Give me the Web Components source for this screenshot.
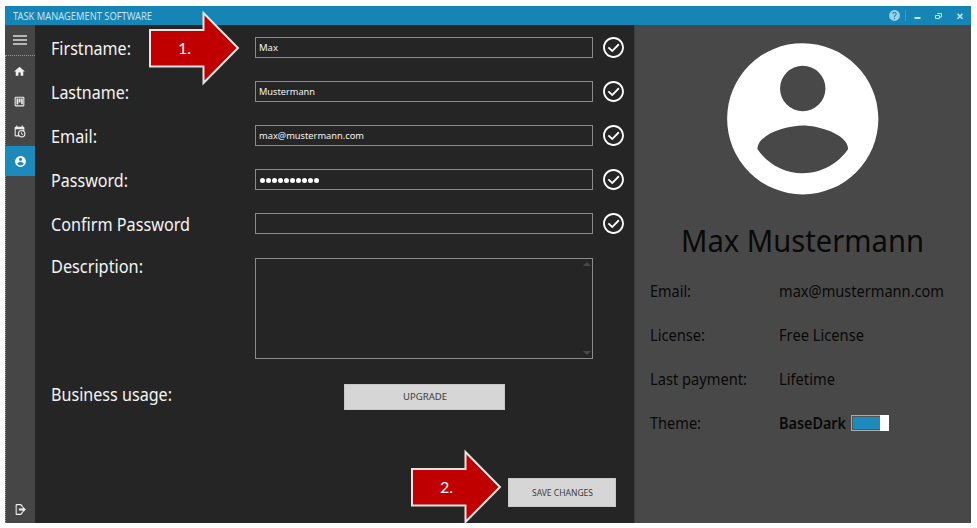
<!DOCTYPE html>
<html lang="en"><head><meta charset="utf-8"><title>Task Management Software</title>
<style>html,body{margin:0;height:100%;background:#fff;overflow:hidden}body{font-family:"Noto Sans","Open Sans",sans-serif}</style></head>
<body><task-app></task-app>
<script>
const define=(name,html,init)=>customElements.define(name,class extends HTMLElement{
  connectedCallback(){
    if(this.shadowRoot)return;
    const t=document.createElement('template');
    t.innerHTML=typeof html==='function'?html(this):html;
    this.attachShadow({mode:'open'}).append(t.content.cloneNode(true));
    if(init)init(this);
  }
});
// Text run scaled horizontally to a given width
define('fit-text','<style>:host{display:inline-block;white-space:nowrap;text-align:left}span{display:inline-block;transform-origin:0 50%}</style><span><slot></slot></span>',el=>{
  const s=el.shadowRoot.querySelector('span'),w=+el.getAttribute('w');
  s.style.transform=`scaleX(${w/s.getBoundingClientRect().width})`;
  el.style.width=w+'px';
});
const icons={
  home:'M10,20V14H14V20H19V12H22L12,3L2,12H5V20H10Z',
  board:'M5 3H19A2 2 0 0 1 21 5V19A2 2 0 0 1 19 21H5A2 2 0 0 1 3 19V5A2 2 0 0 1 5 3M5 5V19H19V5ZM6.5 6.5H9.8V17.5H6.5ZM10.800 6.5H14V14H10.800ZM15 6.5H18V17H15Z',
  schedule:'M15,13H16.5V15.82L18.94,17.23L18.19,18.53L15,16.69V13M19,8H5V19H9.67C9.24,18.09 9,17.07 9,16A7,7 0 0,1 16,9C17.07,9 18.09,9.24 19,9.67V8M5,21C3.89,21 3,20.1 3,19V5C3,3.89 3.89,3 5,3H6V1H8V3H16V1H18V3H19A2,2 0 0,1 21,5V11.1C22.24,12.36 23,14.09 23,16A7,7 0 0,1 16,23C14.09,23 12.36,22.24 11.1,21H5M16,11.15A4.85,4.85 0 0,0 11.15,16C11.15,18.68 13.32,20.85 16,20.85A4.85,4.85 0 0,0 20.85,16C20.85,13.32 18.68,11.15 16,11.15Z',
  account:'M12,19.2C9.5,19.2 7.29,17.92 6,16C6.03,14 10,12.9 12,12.9C14,12.9 17.97,14 18,16C16.71,17.92 14.5,19.2 12,19.2M12,5A3,3 0 0,1 15,8A3,3 0 0,1 12,11A3,3 0 0,1 9,8A3,3 0 0,1 12,5M12,2A10,10 0 0,0 2,12A10,10 0 0,0 12,22A10,10 0 0,0 22,12C22,6.47 17.5,2 12,2Z',
  exit:'M4 2H13L16 5V8H14V6L12 4H5V20H12L14 18V16H16V19L13 22H4L3 21V3ZM9 10H16V6.5L22 12L16 17.5V14H9Z',
  check:'M12 2C6.5 2 2 6.5 2 12S6.500 22 12 22 22 17.500 22 12 17.500 2 12 2M12 20.200C7.500 20.200 3.800 16.500 3.800 12S7.500 3.800 12 3.800 20.200 7.500 20.200 12 16.500 20.200 12 20.200M16.500 8.200L10.800 14.100L7.700 11.200L6.500 12.500L10.800 16.600L17.800 9.500Z',
  help:'M15.07,11.25L14.17,12.17C13.45,12.89 13,13.5 13,15H11V14.5C11,13.39 11.45,12.39 12.17,11.67L13.41,10.41C13.78,10.05 14,9.55 14,9C14,7.89 13.1,7 12,7A2,2 0 0,0 10,9H8A4,4 0 0,1 12,5A4,4 0 0,1 16,9C16,9.88 15.64,10.67 15.07,11.25M13,19H11V17H13M12,2A10,10 0 0,0 2,12A10,10 0 0,0 12,22A10,10 0 0,0 22,12C22,6.47 17.5,2 12,2Z'
};
define('ui-icon',el=>`<style>:host{display:block;flex:none;width:${el.getAttribute('size')}px;height:${el.getAttribute('size')}px}svg{display:block;width:100%;height:100%}</style><svg viewBox="0 0 24 24" fill="currentColor" fill-rule="evenodd"><path d="${icons[el.getAttribute('name')]}"/></svg>`);
define('title-bar',`<style>:host{display:flex;align-items:center;height:19px;background:#1585b5;color:#c7e3ef;padding:0 6px 0 8px;font-size:10px;line-height:19px}
.sp{flex:1}.sep{width:1px;height:11px;background:#3f9cc4;margin:0 7px 0 4px}svg{display:block}fit-text{padding-top:1px}</style>
<fit-text w="139">TASK MANAGEMENT SOFTWARE</fit-text><div class="sp"></div><ui-icon name="help" size="13" style="color:#9fcfe3"></ui-icon><div class="sep"></div>
<svg width="52" height="12" fill="none" stroke="#c7e3ef"><path d="M1.500 8H7.500" stroke-width="2"/><path d="M24.500 4V3.500H28.500V7H27M22.500 5.500H26.500V8.500H22.500Z"/><path d="M44.500 3.700L49.500 8.700M49.500 3.700L44.500 8.700" stroke-width="1.600"/></svg>`);
define('nav-item',el=>`<style>:host{display:flex;height:30px;align-items:center;justify-content:center;box-sizing:border-box;padding:0 1.500px 0 0;color:#eee}:host([active]){background:#1c8abb;color:#fff;margin-left:-1px;padding-right:0}</style><ui-icon name="${el.getAttribute('icon')}" size="13"></ui-icon>`);
define('side-nav',`<style>:host{display:flex;flex-direction:column;background:#464646}.burger{height:30px;box-sizing:border-box;padding:10px 8px 0 8px;display:flex;flex-direction:column;gap:2px}.burger i{height:2px;background:#b5b5b5}
.items{flex:1;display:flex;flex-direction:column;border-top:1px dotted #999;border-left:1px dotted #999;box-sizing:border-box}.sp{flex:1}nav-item[icon=exit]{padding:2px 1px 0 0}</style>
<div class="burger"><i></i><i></i><i></i></div><div class="items"><nav-item icon="home"></nav-item><nav-item icon="board"></nav-item><nav-item icon="schedule"></nav-item><nav-item icon="account" active></nav-item><div class="sp"></div><nav-item icon="exit"></nav-item></div>`);
define('form-row',el=>`<style>:host{display:grid;grid-template-columns:204px 339px 1fr;height:44px;align-items:center;color:#f4f4f4;font-size:17.500px;line-height:24px}
.f{height:21px;box-sizing:border-box;border:1px solid #8b8b8b;font-size:9.500px;line-height:19px;padding:1px 0 0 3px;display:flex;align-items:center;width:338px}ui-icon{margin-left:6.500px;color:#fff}.l{padding-top:2px}</style>
<div class="l"><fit-text w="${el.getAttribute('w')}">${el.getAttribute('label')}</fit-text></div><div class="f"><slot></slot></div><ui-icon name="check" size="25"></ui-icon>`);
define('password-dots','<style>:host{display:flex;gap:1.050px;padding:1px 0 0 1px}i{width:5px;height:5px;border-radius:50%;background:#fff}</style>'+'<i></i>'.repeat(10));
define('text-area','<style>:host{display:flex;flex-direction:column;justify-content:space-between;align-items:flex-end;box-sizing:border-box;width:338px;height:101px;border:1px solid #8b8b8b;padding:3px 1px}svg{display:block;fill:#484848}</style><svg width="8" height="4"><path d="M0 4L4 0L8 4Z"/></svg><svg width="8" height="4"><path d="M0 0L4 4L8 0Z"/></svg>');
define('flat-button',el=>`<style>:host{display:flex;align-items:center;justify-content:center;box-sizing:border-box;background:#d6d6d6;border:1px solid #c8c8c8;color:#3c3c3c;font-size:9.700px;line-height:14px}</style><fit-text w="${el.getAttribute('w')}"><slot></slot></fit-text>`);
define('profile-form',`<style>:host{display:flex;flex-direction:column;background:#252525;padding-left:16px;color:#f4f4f4;font-size:17.500px;line-height:24px}
.d{display:grid;grid-template-columns:204px 1fr;padding-top:13px}.d .l{margin-top:-4px}.b{display:grid;grid-template-columns:293px 161px;align-items:center;height:26px;margin-top:25px}.b flat-button{height:26px}.b .l{margin-top:-6px}.s{display:flex;justify-content:flex-end;padding:68px 18px 0 0}.s flat-button{width:108px;height:29px}</style>
<form-row label="Firstname:" w="80"><fit-text w="19">Max</fit-text></form-row><form-row label="Lastname:" w="78"><fit-text w="56">Mustermann</fit-text></form-row><form-row label="Email:" w="46"><fit-text w="105">max@mustermann.com</fit-text></form-row><form-row label="Password:" w="77"><password-dots></password-dots></form-row><form-row label="Confirm Password" w="139"></form-row>
<div class="d"><div class="l"><fit-text w="92">Description:</fit-text></div><text-area></text-area></div>
<div class="b"><div class="l"><fit-text w="121">Business usage:</fit-text></div><flat-button w="44">UPGRADE</flat-button></div>
<div class="s"><flat-button w="61">SAVE CHANGES</flat-button></div>`);
define('info-row',el=>`<style>:host{display:grid;grid-template-columns:129px 1fr;height:44px;align-items:center;font-size:15.500px;line-height:22px}.v{display:flex;align-items:center}</style><div><fit-text w="${el.getAttribute('w')}">${el.getAttribute('label')}</fit-text></div><div class="v"><slot></slot></div>`);
define('toggle-switch','<style>:host{display:flex;box-sizing:border-box;width:38px;height:16px;border:1px solid #aaa;padding:1px 0 1px 1px;margin:0 0 0 5px;background:#555}.t{flex:1;background:#1c8abb}.k{width:9px;margin:-2px -1px -2px 0;background:#fff}</style><div class="t"></div><div class="k"></div>');
define('profile-card',`<style>:host{display:flex;flex-direction:column;background:#484848;color:#090909;border-left:1px solid #3c3c3c}ui-icon{margin:3px auto 0;color:#fff}.n{text-align:center;font-size:31px;line-height:44px;margin-top:8px;height:44px;padding-right:1px}.r{margin:7px 0 0 15px}</style>
<ui-icon name="account" size="181.500"></ui-icon><div class="n"><fit-text w="243">Max Mustermann</fit-text></div>
<div class="r"><info-row label="Email:" w="41"><fit-text w="165">max@mustermann.com</fit-text></info-row><info-row label="License:" w="55"><fit-text w="85">Free License</fit-text></info-row><info-row label="Last payment:" w="97"><fit-text w="56">Lifetime</fit-text></info-row><info-row label="Theme:" w="51"><fit-text w="67" style="font-weight:600">BaseDark</fit-text><toggle-switch></toggle-switch></info-row></div>`);
define('step-arrow','<style>:host{position:absolute;width:92px;height:76px;overflow:hidden}svg{position:absolute;inset:0}span{position:absolute;left:29px;top:28px;font:16px/20px Lato,sans-serif;color:#fff}</style><svg width="92" height="76"><path d="M1 20H54.500V3L89 38L54.500 73V56.500H1Z" fill="#c00000" stroke="#e4e4e4" stroke-width="2"/></svg><span><slot></slot></span>');
define('task-app',`<style>:host{display:grid;grid-template:19px 1fr/30px 599px 1fr;box-sizing:border-box;width:966px;height:517px;margin:6px 0 0 5px;position:relative;overflow:hidden}title-bar{grid-column:1/-1}</style>
<title-bar></title-bar><side-nav></side-nav><profile-form></profile-form><profile-card></profile-card><step-arrow style="left:144px;top:4px">1.</step-arrow><step-arrow style="left:406px;top:443px">2.</step-arrow>`);
</script></body></html>
